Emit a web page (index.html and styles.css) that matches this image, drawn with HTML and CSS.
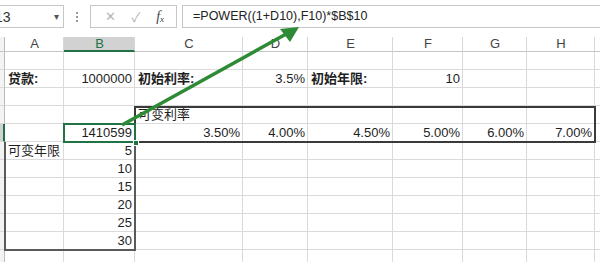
FILE: index.html
```html
<!DOCTYPE html>
<html lang="zh">
    <head>
        <meta charset="utf-8">
        <link rel="stylesheet" href="styles.css">
    </head>
    <body>
        <div class="toolbar">
            <div class="namebox"><span class="ref">13</span><span class="drop">&#9662;</span></div>
            <div class="grip"><i></i><i></i><i></i></div>
            <div class="btns">
                <span class="btn">&#x2715;</span>
                <span class="btn">&#x2713;</span>
                <span class="btn fx">f<sub>x</sub></span>
            </div>
            <div class="formula">=POWER((1+D10),F10)*$B$10</div>
        </div>

        <div class="sheet">
            <div class="row head">
                <div class="rh corner"></div>
                <div class="ch">A</div>
                <div class="ch on">B</div>
                <div class="ch">C</div>
                <div class="ch">D</div>
                <div class="ch">E</div>
                <div class="ch">F</div>
                <div class="ch">G</div>
                <div class="ch">H</div>
                <div class="ch"></div>
            </div>
            <div class="row">
                <div class="rh"></div><div></div><div></div><div></div><div></div><div></div><div></div><div></div><div></div><div></div>
            </div>
            <div class="row">
                <div class="rh"></div>
                <div class="b">贷款:</div>
                <div class="n">1000000</div>
                <div class="b">初始利率:</div>
                <div class="n">3.5%</div>
                <div class="b">初始年限:</div>
                <div class="n">10</div>
                <div></div><div></div><div></div>
            </div>
            <div class="row">
                <div class="rh"></div><div></div><div></div><div></div><div></div><div></div><div></div><div></div><div></div><div></div>
            </div>
            <div class="row">
                <div class="rh"></div><div></div><div></div>
                <div>可变利率</div>
                <div></div><div></div><div></div><div></div><div></div><div></div>
            </div>
            <div class="row">
                <div class="rh sel"></div>
                <div></div>
                <div class="n">1410599</div>
                <div class="n">3.50%</div>
                <div class="n">4.00%</div>
                <div class="n">4.50%</div>
                <div class="n">5.00%</div>
                <div class="n">6.00%</div>
                <div class="n">7.00%</div>
                <div></div>
            </div>
            <div class="row">
                <div class="rh"></div>
                <div>可变年限</div>
                <div class="n">5</div>
                <div></div><div></div><div></div><div></div><div></div><div></div><div></div>
            </div>
            <div class="row">
                <div class="rh"></div><div></div><div class="n">10</div><div></div><div></div><div></div><div></div><div></div><div></div><div></div>
            </div>
            <div class="row">
                <div class="rh"></div><div></div><div class="n">15</div><div></div><div></div><div></div><div></div><div></div><div></div><div></div>
            </div>
            <div class="row">
                <div class="rh"></div><div></div><div class="n">20</div><div></div><div></div><div></div><div></div><div></div><div></div><div></div>
            </div>
            <div class="row">
                <div class="rh"></div><div></div><div class="n">25</div><div></div><div></div><div></div><div></div><div></div><div></div><div></div>
            </div>
            <div class="row">
                <div class="rh"></div><div></div><div class="n">30</div><div></div><div></div><div></div><div></div><div></div><div></div><div></div>
            </div>
            <div class="row">
                <div class="rh"></div><div></div><div></div><div></div><div></div><div></div><div></div><div></div><div></div><div></div>
            </div>

            <!-- range borders + selection, drawn over the cells -->
            <div class="range rates"></div>
            <div class="range years"></div>
            <div class="cursor"><span class="handle"></span></div>
        </div>

        <svg class="arrow" width="600" height="262" viewBox="0 0 600 262">
            <line x1="122" y1="125" x2="288" y2="33" stroke="#2f8a35" stroke-width="3.5"/>
            <polygon points="299,27 280,29 290,42" fill="#2f8a35"/>
        </svg>
    </body>
</html>
```

FILE: styles.css
```css
*{
  margin: 0;
  padding: 0;
  box-sizing: border-box;
}

body{
  width: 600px;
  height: 262px;
  overflow: hidden;
  position: relative;
  background: #fff;
  font-family: "Liberation Sans", "Noto Sans CJK SC", sans-serif;
  font-size: 13px;
  color: #1e1e1e;
}

/* formula bar */
.toolbar{
  height: 37px;
  padding-top: 5px;
  display: flex;
  align-items: flex-start;
}

.namebox{
  width: 84px;
  height: 23px;
  margin-left: -20px;
  border: 1px solid #c6c6c6;
  display: flex;
  align-items: center;
  justify-content: space-between;
  padding: 0 4px 0 14px;
  font-size: 14px;
  color: #333;
  overflow: hidden;
}

.namebox .drop{
  font-size: 10px;
  color: #555;
}

.grip{
  width: 26px;
  height: 23px;
  display: flex;
  flex-direction: column;
  align-items: center;
  justify-content: center;
  gap: 2px;
}

.grip i{
  width: 2px;
  height: 2px;
  background: #9a9a9a;
}

.btns{
  width: 87px;
  height: 23px;
  border: 1px solid #c6c6c6;
  display: flex;
  align-items: center;
  justify-content: space-around;
  padding: 0 4px 0 6px;
  color: #b4b4b4;
  font-size: 13px;
}

.btn.fx{
  font-family: "Liberation Serif", serif;
  font-style: italic;
  color: #444;
  font-size: 14px;
}

.btn.fx sub{
  font-size: 9px;
  vertical-align: -1px;
}

.formula{
  flex: 1;
  height: 23px;
  margin-left: 5px;
  margin-right: -10px;
  border: 1px solid #c6c6c6;
  padding-left: 10px;
  line-height: 21px;
  font-size: 12.5px;
  color: #222;
  white-space: nowrap;
}

/* sheet */
.sheet{
  position: relative;
  width: 625px;
}

.row{
  display: grid;
  grid-template-columns: 5px 59px 71px 108px 65px 85px 70px 64px 68px 30px;
  height: 18px;
}

.row > div{
  border-right: 1px solid #dadada;
  border-bottom: 1px solid #dadada;
  padding: 0 2px 0 3px;
  line-height: 17px;
  white-space: nowrap;
  overflow: hidden;
}

.row > div.n{
  text-align: right;
}

.row > div.b{
  font-weight: bold;
}

.row > div.rh{
  background: #f3f3f3;
  border-right-color: #bcbcbc;
  padding: 0;
}

.row > div.rh.sel{
  background: #d2d2d2;
  border-right: 2px solid #217346;
}

.head{
  height: 15px;
}

.head > div.ch{
  border-bottom-color: #c6c6c6;
  border-right-color: #d6d6d6;
  text-align: center;
  line-height: 14px;
  color: #444;
  font-size: 13px;
}

.head > div.ch.on{
  background: #d2d2d2;
  border-bottom: 2px solid #217346;
  color: #217346;
}

.head > div.corner{
  border-bottom-color: #c6c6c6;
}

.range{
  position: absolute;
  border: 2px solid #3a3a3a;
  pointer-events: none;
}

.range.rates{
  left: 134px;
  top: 69px;
  width: 462px;
  height: 37px;
}

.range.years{
  left: 4px;
  top: 105px;
  width: 132px;
  height: 109px;
  border-top: 0;
  border-color: #5a5a5a;
}

.cursor{
  position: absolute;
  left: 63px;
  top: 86px;
  width: 73px;
  height: 20px;
  border: 2px solid #217346;
}

.cursor .handle{
  position: absolute;
  right: -5px;
  bottom: -5px;
  width: 6px;
  height: 6px;
  background: #217346;
  border: 1px solid #fff;
}

.arrow{
  position: absolute;
  left: 0;
  top: 0;
  pointer-events: none;
}
```
